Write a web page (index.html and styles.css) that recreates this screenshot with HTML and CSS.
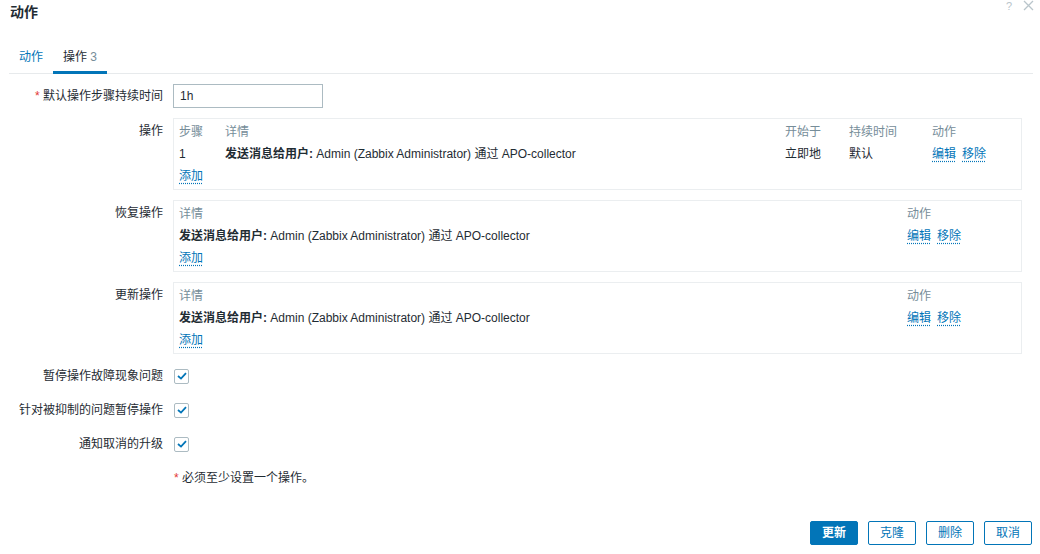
FILE: index.html
```html
<!DOCTYPE html>
<html lang="zh">
<head>
<meta charset="utf-8">
<title>动作</title>
<link rel="stylesheet" href="styles.css">
</head>
<body>
<div class="dialog">
  <div class="header">
    <div class="title">动作</div>
    <div class="header-icons">
      <span class="help">?</span>
      <svg class="close" width="11" height="11" viewBox="0 0 11 11"><path d="M1 1 L10 10 M10 1 L1 10" stroke="#b9c5cb" stroke-width="1.3" fill="none"/></svg>
    </div>
  </div>
  <div class="tabs">
    <div class="tab">动作</div>
    <div class="tab active">操作 <span class="count">3</span></div>
  </div>
  <div class="form">
    <div class="label mid"><span class="req">*</span> 默认操作步骤持续时间</div>
    <div class="field"><div class="input">1h</div></div>

    <div class="label top">操作</div>
    <div class="field">
      <div class="box">
        <div class="grid ops">
          <div class="th">步骤</div><div class="th">详情</div><div class="th">开始于</div><div class="th">持续时间</div><div class="th">动作</div>
          <div>1</div><div><b>发送消息给用户:</b> Admin (Zabbix Administrator) 通过 APO-collector</div><div>立即地</div><div>默认</div><div><a class="link gap">编辑</a><a class="link">移除</a></div>
          <div class="full"><a class="link">添加</a></div>
        </div>
      </div>
    </div>

    <div class="label top">恢复操作</div>
    <div class="field">
      <div class="box">
        <div class="grid two">
          <div class="th">详情</div><div class="th">动作</div>
          <div><b>发送消息给用户:</b> Admin (Zabbix Administrator) 通过 APO-collector</div><div><a class="link gap">编辑</a><a class="link">移除</a></div>
          <div class="full"><a class="link">添加</a></div>
        </div>
      </div>
    </div>

    <div class="label top">更新操作</div>
    <div class="field">
      <div class="box">
        <div class="grid two">
          <div class="th">详情</div><div class="th">动作</div>
          <div><b>发送消息给用户:</b> Admin (Zabbix Administrator) 通过 APO-collector</div><div><a class="link gap">编辑</a><a class="link">移除</a></div>
          <div class="full"><a class="link">添加</a></div>
        </div>
      </div>
    </div>

    <div class="label mid">暂停操作故障现象问题</div>
    <div class="field mid"><span class="check"><svg width="10" height="8" viewBox="0 0 10 8"><path d="M1 4 L4 6.6 L9 1.2" stroke="#0275b8" stroke-width="1.8" fill="none"/></svg></span></div>

    <div class="label mid">针对被抑制的问题暂停操作</div>
    <div class="field mid"><span class="check"><svg width="10" height="8" viewBox="0 0 10 8"><path d="M1 4 L4 6.6 L9 1.2" stroke="#0275b8" stroke-width="1.8" fill="none"/></svg></span></div>

    <div class="label mid">通知取消的升级</div>
    <div class="field mid"><span class="check"><svg width="10" height="8" viewBox="0 0 10 8"><path d="M1 4 L4 6.6 L9 1.2" stroke="#0275b8" stroke-width="1.8" fill="none"/></svg></span></div>

    <div class="label mid"></div>
    <div class="field note"><span class="req">*</span> 必须至少设置一个操作。</div>
  </div>
  <div class="footer">
    <button class="btn primary">更新</button>
    <button class="btn">克隆</button>
    <button class="btn">删除</button>
    <button class="btn">取消</button>
  </div>
</div>
</body>
</html>
```
FILE: styles.css
```css
html, body {
  margin: 0;
  padding: 0;
  background: #ffffff;
}
body {
  font-family: "Liberation Sans", "Noto Sans CJK SC", sans-serif;
  font-size: 12px;
  color: #1f2c33;
}
.dialog {
  display: flex;
  flex-direction: column;
  height: 554px;
}
.header {
  height: 41px;
  display: flex;
  justify-content: space-between;
  align-items: flex-start;
}
.title {
  padding-left: 10px;
  font-size: 14px;
  line-height: 25px;
  font-weight: bold;
  color: #1f2c33;
}
.header-icons {
  display: flex;
  align-items: flex-start;
  gap: 11px;
  margin-right: 6px;
}
.help {
  font-size: 11px;
  line-height: 11px;
  color: #b9c5cb;
  margin-top: 1px;
}
.close {
  display: block;
}
.tabs {
  display: flex;
  margin: 0 7px 0 9px;
  height: 32px;
  border-bottom: 1px solid #e7eaec;
}
.tab {
  padding: 3px 10px 0;
  line-height: 27px;
  height: 27px;
  border-bottom: 3px solid transparent;
  color: #0275b8;
}
.tab.active {
  color: #1f2c33;
  border-bottom-color: #0275b8;
}
.count {
  color: #768d99;
}
.form {
  display: grid;
  grid-template-columns: 163px 1fr;
  column-gap: 10px;
  row-gap: 10px;
  margin: 10px 18px 0 0;
}
.label {
  text-align: right;
  line-height: 24px;
}
.label.top {
  padding-top: 1px;
}
.req {
  color: #e33734;
}
.field.mid {
  display: flex;
  align-items: center;
  height: 24px;
}
.input {
  box-sizing: border-box;
  width: 150px;
  height: 24px;
  border: 1px solid #acbbc2;
  padding: 0 6px;
  line-height: 22px;
}
.box {
  border: 1px solid #ebeef0;
  padding: 2px 5px 2px;
  height: 66px;
}
.grid {
  display: grid;
  grid-auto-rows: 22px;
  line-height: 22px;
}
.grid.ops {
  grid-template-columns: 46px 1fr 64px 83px 84px;
}
.grid.two {
  grid-template-columns: 1fr 109px;
}
.grid .full {
  grid-column: 1 / -1;
}
.th {
  color: #768d99;
}
.link {
  color: #0275b8;
  text-decoration: underline dotted #0275b8;
  text-underline-offset: 3px;
  cursor: pointer;
}
.link.gap {
  margin-right: 6px;
}
.check {
  box-sizing: border-box;
  width: 15px;
  height: 15px;
  margin-left: 1px;
  border: 1px solid #acbbc2;
  border-radius: 2px;
  display: flex;
  align-items: center;
  justify-content: center;
}
.check svg {
  display: block;
}
.note {
  line-height: 24px;
  height: 24px;
  padding-left: 1px;
}
.footer {
  margin-top: auto;
  display: flex;
  justify-content: flex-end;
  gap: 10px;
  padding: 0 8px 9px 0;
}
.btn {
  box-sizing: border-box;
  width: 48px;
  height: 24px;
  padding: 0;
  border: 1px solid #0275b8;
  border-radius: 2px;
  background: #ffffff;
  color: #0275b8;
  font-family: "Liberation Sans", "Noto Sans CJK SC", sans-serif;
  font-size: 12px;
  line-height: 22px;
}
.btn.primary {
  background: #0275b8;
  color: #ffffff;
  font-weight: bold;
}
```
